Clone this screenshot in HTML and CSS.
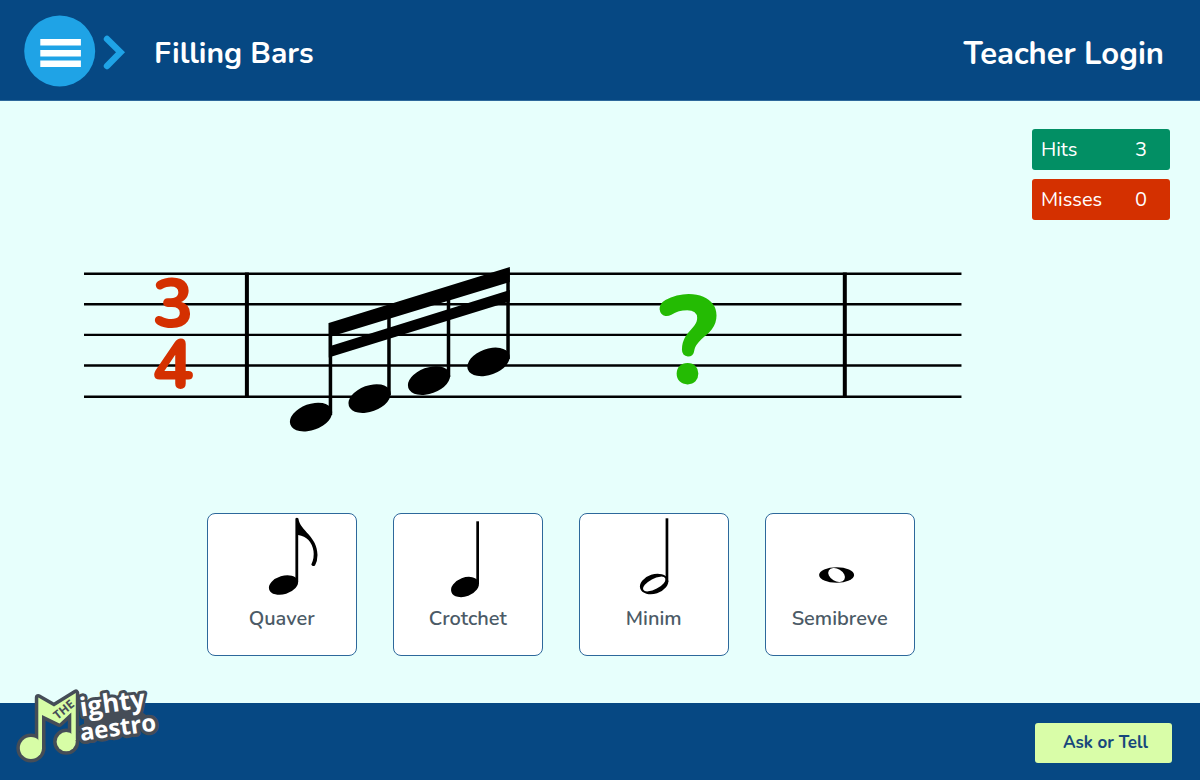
FILE: index.html
```html
<!DOCTYPE html>
<html lang="en">
<head>
<meta charset="utf-8">
<meta name="viewport" content="width=device-width, initial-scale=1">
<title>Filling Bars</title>
<link rel="stylesheet" href="styles.css">
</head>
<body>
<header class="header">
  <button class="menu" type="button" aria-label="Menu">
    <svg width="102" height="72" viewBox="24 15 102 72" aria-hidden="true">
      <circle cx="59.7" cy="51" r="35.5" fill="#1fa3e6"/>
      <path d="M40.3 39h40.6v6.6H40.3zM40.3 50h40.6v6.4H40.3zM40.3 60.4h40.6v6.6H40.3z" fill="#fff"/>
      <path d="M107 39l13.5 13.3L107 66" fill="none" stroke="#1fa3e6" stroke-width="6.4" stroke-linecap="round"/>
    </svg>
  </button>
  <h1 class="title">Filling Bars</h1>
  <a class="login" href="#login">Teacher Login</a>
</header>

<main class="main">
  <dl class="scores">
    <div class="score score-hits"><dt>Hits</dt><dd>3</dd></div>
    <div class="score score-misses"><dt>Misses</dt><dd>0</dd></div>
  </dl>

  <svg class="staff" viewBox="84 260 877 180" role="img" aria-label="Bar to fill in 3/4 time">
    <path d="M84 273.8h877M84 304.2h877M84 334.8h877M84 365.4h877M84 396.7h877" stroke="#000" stroke-width="2.4"/>
    <path d="M246.8 272.6v125.4M844.4 272.6v125.4" stroke="#000" stroke-width="4"/>
    <path d="M328.6 323L509.6 267V282L331.8 336.3V345.5L509.6 290V301.5L328.6 357.5z"/>
    <path d="M330.3 323v92M388.8 308v87M448.3 295v82M507.8 269v90" stroke="#000" stroke-width="3.5"/>
    <ellipse cx="310.9" cy="417" rx="22" ry="13" transform="rotate(-20 310.9 417)"/>
    <ellipse cx="369.4" cy="398.5" rx="22" ry="13" transform="rotate(-20 369.4 398.5)"/>
    <ellipse cx="428.8" cy="380.5" rx="22" ry="13" transform="rotate(-20 428.8 380.5)"/>
    <ellipse cx="488.3" cy="361.8" rx="22" ry="13" transform="rotate(-20 488.3 361.8)"/>
    <text class="signature" x="173" y="327">3</text>
    <text class="signature" x="173" y="388">4</text>
    <text class="unknown" x="688" y="384">?</text>
  </svg>

  <div class="answers">
    <button class="answer" type="button">
      <svg width="148" height="91" viewBox="208 514 148 91" aria-hidden="true">
        <ellipse cx="283.5" cy="585" rx="15" ry="9.2" transform="rotate(-17 283.5 585)"/>
        <path d="M295.4 518.5q1.5-1.5 3 0C300 531 317.5 536 317.5 555Q317.5 561 315 565.5Q312.5 567 311.3 564.5Q314.5 558 313.5 551Q311 537 298.2 535V582h-2.8z"/>
      </svg>
      Quaver
    </button>
    <button class="answer" type="button">
      <svg width="148" height="91" viewBox="394 514 148 91" aria-hidden="true">
        <ellipse cx="465" cy="587" rx="14.5" ry="9.3" transform="rotate(-21 465 587)"/>
        <path d="M476.3 521.3h2.7V584h-2.7z"/>
      </svg>
      Crotchet
    </button>
    <button class="answer" type="button">
      <svg width="148" height="91" viewBox="579 514 148 91" aria-hidden="true">
        <ellipse cx="653.1" cy="584" rx="14.6" ry="9.6" transform="rotate(-18 653.1 584)"/>
        <ellipse cx="653.3" cy="584" rx="12.4" ry="5.2" transform="rotate(-28 653.3 584)" fill="#fff"/>
        <path d="M664.6 518.3h2.7V582h-2.7z"/>
      </svg>
      Minim
    </button>
    <button class="answer" type="button">
      <svg width="148" height="91" viewBox="765 514 148 91" aria-hidden="true">
        <ellipse cx="835.6" cy="575" rx="17.5" ry="7.8"/>
        <ellipse cx="835.6" cy="575" rx="9" ry="6.2" transform="rotate(30 835.6 575)" fill="#fff"/>
      </svg>
      Semibreve
    </button>
  </div>
</main>

<footer class="footer">
  <a class="logo" href="#home" aria-label="The Mighty Maestro">
    <svg width="144" height="78" viewBox="15 686 144 78">
      <defs>
        <g id="notes">
          <path d="M38.3 697.5L54 706.5L75.8 693V740H71.3V712.5L59.5 723.5L42 715V749H38.3z"/>
          <circle cx="30.9" cy="748" r="11.1"/>
          <circle cx="66.2" cy="741.7" r="9.6"/>
        </g>
      </defs>
      <use href="#notes" fill="#454d57" stroke="#454d57" stroke-width="7" stroke-linejoin="round"/>
      <path d="M84 706L140 700L142 712L150 718L151 728L84 738z" fill="#454d57"/>
      <use href="#notes" fill="#d7fda6"/>
      <text class="logo-the" transform="translate(57.5 720) rotate(-39)">THE</text>
      <text class="logo-word" transform="translate(81 741) rotate(-8)">aestro</text>
      <text class="logo-word logo-word-top" transform="translate(81 716.5) rotate(-8)">ighty</text>
    </svg>
  </a>
  <button class="ask" type="button">Ask or Tell</button>
</footer>
</body>
</html>
```
FILE: styles.css
```css
* {
  box-sizing: border-box;
}

body {
  margin: 0;
  min-height: 100vh;
  display: flex;
  flex-direction: column;
  background: #e7fffc;
  font-family: Nunito, Lato, "Open Sans", sans-serif;
}

button {
  font-family: inherit;
  cursor: pointer;
}

.header {
  display: flex;
  align-items: center;
  min-height: 101px;
  padding: 2px 36px 0 24px;
  background: #064883;
  color: #fff;
  border-bottom: 1px solid #2d689b;
}

.menu {
  display: flex;
  padding: 0;
  border: 0;
  background: none;
}

.title,
.login {
  margin: 6px 0 0 28px;
  font-size: 30px;
  line-height: 40px;
  font-weight: 700;
}

.login {
  margin-left: auto;
  color: #fff;
  font-size: 31px;
  text-decoration: none;
}

.main {
  flex: 1;
  display: flex;
  flex-direction: column;
  padding: 28px 30px 46px 84px;
}

.scores {
  display: flex;
  flex-direction: column;
  align-self: flex-end;
  gap: 9px;
  width: 138px;
  margin: 0 0 40px;
  color: #fff;
  font-size: 20px;
  line-height: 40px;
}

.score {
  display: flex;
  justify-content: space-between;
  padding: 1px 23px 0 9px;
  border-radius: 3px;
}

.score dd {
  margin: 0;
}

.score-hits {
  background: #028f64;
}

.score-misses {
  background: #d43000;
}

.staff {
  width: 80.8%;
  overflow: visible;
}

.signature {
  fill: #d43000;
  font-size: 69px;
  font-weight: 800;
  text-anchor: middle;
}

.unknown {
  fill: #24bb03;
  font-size: 126px;
  font-weight: 800;
  text-anchor: middle;
}

.answers {
  display: flex;
  flex-wrap: wrap;
  gap: 36px;
  margin: 73px 0 0 11.3%;
}

.answer {
  display: flex;
  flex-direction: column;
  align-items: center;
  width: 150px;
  padding: 0 0 22px;
  border: 1px solid #2d689b;
  border-radius: 8px;
  background: #fff;
  color: #4b5a66;
  font-size: 20px;
  line-height: 28px;
  font-weight: 600;
}

.footer {
  display: flex;
  align-items: center;
  justify-content: space-between;
  height: 77px;
  padding: 2px 28px 0 15px;
  background: #064883;
}

.logo {
  display: flex;
  margin-top: -36px;
}

.logo svg {
  overflow: visible;
}

.logo-the {
  fill: #454d57;
  font: 700 12px "Open Sans", sans-serif;
}

.logo-word {
  fill: #fff;
  stroke: #454d57;
  stroke-width: 7px;
  stroke-linejoin: round;
  paint-order: stroke;
  font: 700 24px "Open Sans", sans-serif;
}

.logo-word-top {
  font-size: 26px;
  stroke-width: 6px;
}

.ask {
  width: 137px;
  height: 40px;
  padding: 0 0 0 4px;
  border: 0;
  border-radius: 3px;
  background: #d9fda8;
  color: #17477c;
  font-size: 17px;
  font-weight: 700;
}
```
